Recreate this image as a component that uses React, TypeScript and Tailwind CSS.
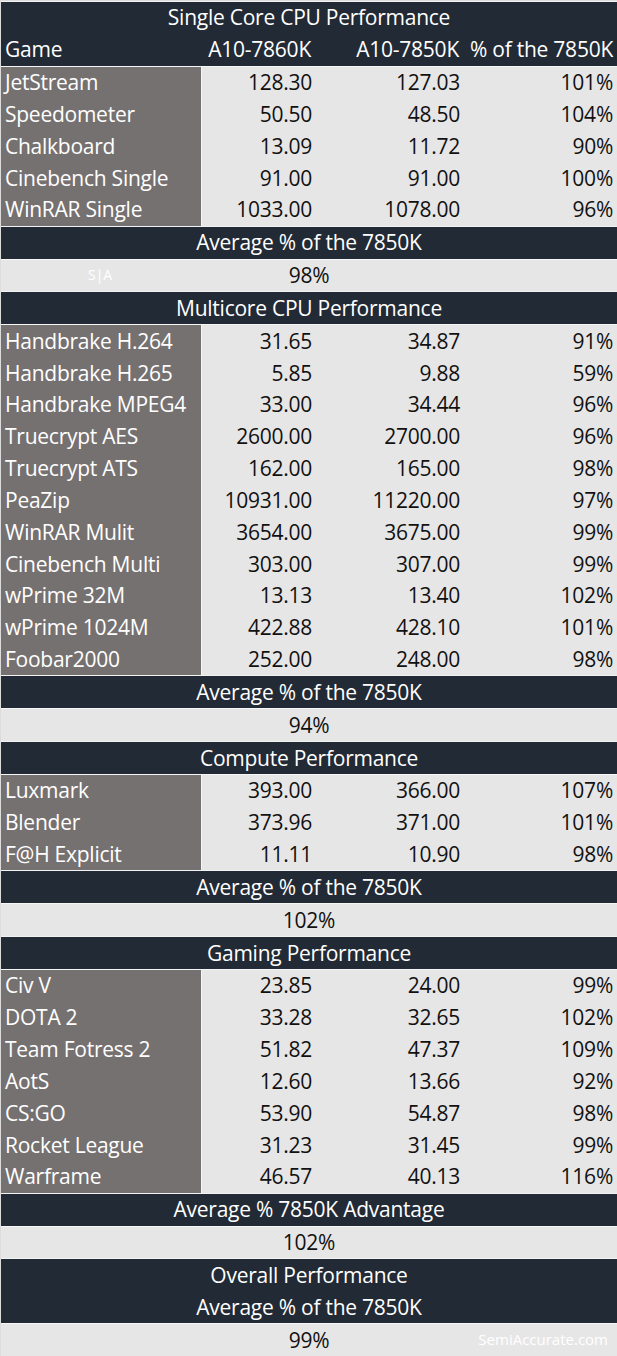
type Row = [string, string, string, string];

type Block =
  | { kind: "title"; text: string }
  | { kind: "head" }
  | { kind: "data"; rows: Row[] }
  | { kind: "value"; text: string; mark?: "sa" | "site" };

const blocks: Block[] = [
  { kind: "title", text: "Single Core CPU Performance" },
  { kind: "head" },
  {
    kind: "data",
    rows: [
      ["JetStream", "128.30", "127.03", "101%"],
      ["Speedometer", "50.50", "48.50", "104%"],
      ["Chalkboard", "13.09", "11.72", "90%"],
      ["Cinebench Single", "91.00", "91.00", "100%"],
      ["WinRAR Single", "1033.00", "1078.00", "96%"],
    ],
  },
  { kind: "title", text: "Average % of the 7850K" },
  { kind: "value", text: "98%", mark: "sa" },
  { kind: "title", text: "Multicore CPU Performance" },
  {
    kind: "data",
    rows: [
      ["Handbrake H.264", "31.65", "34.87", "91%"],
      ["Handbrake H.265", "5.85", "9.88", "59%"],
      ["Handbrake MPEG4", "33.00", "34.44", "96%"],
      ["Truecrypt AES", "2600.00", "2700.00", "96%"],
      ["Truecrypt ATS", "162.00", "165.00", "98%"],
      ["PeaZip", "10931.00", "11220.00", "97%"],
      ["WinRAR Mulit", "3654.00", "3675.00", "99%"],
      ["Cinebench Multi", "303.00", "307.00", "99%"],
      ["wPrime 32M", "13.13", "13.40", "102%"],
      ["wPrime 1024M", "422.88", "428.10", "101%"],
      ["Foobar2000", "252.00", "248.00", "98%"],
    ],
  },
  { kind: "title", text: "Average % of the 7850K" },
  { kind: "value", text: "94%" },
  { kind: "title", text: "Compute Performance" },
  {
    kind: "data",
    rows: [
      ["Luxmark", "393.00", "366.00", "107%"],
      ["Blender", "373.96", "371.00", "101%"],
      ["F@H Explicit", "11.11", "10.90", "98%"],
    ],
  },
  { kind: "title", text: "Average % of the 7850K" },
  { kind: "value", text: "102%" },
  { kind: "title", text: "Gaming Performance" },
  {
    kind: "data",
    rows: [
      ["Civ V", "23.85", "24.00", "99%"],
      ["DOTA 2", "33.28", "32.65", "102%"],
      ["Team Fotress 2", "51.82", "47.37", "109%"],
      ["AotS", "12.60", "13.66", "92%"],
      ["CS:GO", "53.90", "54.87", "98%"],
      ["Rocket League", "31.23", "31.45", "99%"],
      ["Warframe", "46.57", "40.13", "116%"],
    ],
  },
  { kind: "title", text: "Average % 7850K Advantage" },
  { kind: "value", text: "102%" },
  { kind: "title", text: "Overall Performance" },
  { kind: "title", text: "Average % of the 7850K" },
  { kind: "value", text: "99%", mark: "site" },
];

const font = { fontFamily: '"Open Sans", "Noto Sans", sans-serif' };

function Cells({ row, dark }: { row: Row; dark?: boolean }) {
  return (
    <div className="flex flex-1 basis-0 min-h-0 items-center">
      <div className={`w-[200px] h-full flex items-center pl-[4px] whitespace-nowrap ${dark ? "" : "bg-[#767171]"}`}>
        {row[0]}
      </div>
      <div className={`h-full flex flex-1 items-center ${dark ? "" : "bg-[#e7e6e6] text-[#111] border-l border-[#f6f6f6]"}`}>
        <div className="w-[110px] text-right whitespace-nowrap">{row[1]}</div>
        <div className="w-[148px] text-right whitespace-nowrap">{row[2]}</div>
        <div className="flex-1 text-right pr-[4px] whitespace-nowrap">{row[3]}</div>
      </div>
    </div>
  );
}

export default function App() {
  return (
    <div
      className="w-[617px] h-[1356px] bg-[#e7e6e6] border-t border-l border-[#dcdcdc] flex flex-col text-[21px] leading-none text-white tracking-[-0.25px]"
      style={font}
    >
      {blocks.map((b, i) => {
        if (b.kind === "title") {
          const prevDark = i > 0 && blocks[i - 1].kind === "title";
          return (
            <div
              key={i}
              className={`flex-1 basis-0 min-h-0 flex items-center justify-center bg-[#222a35] ${prevDark ? "" : "border-t border-[#f2f2f2]"}`}
            >
              {b.text}
            </div>
          );
        }
        if (b.kind === "head") {
          return (
            <div key={i} className="flex-1 basis-0 min-h-0 flex bg-[#222a35]">
              <Cells row={["Game", "A10-7860K", "A10-7850K", "% of the 7850K"]} dark />
            </div>
          );
        }
        if (b.kind === "data") {
          return (
            <div
              key={i}
              className="flex flex-col basis-0 min-h-0 border-t border-[#f6f6f6]"
              style={{ flexGrow: b.rows.length }}
            >
              {b.rows.map((r) => (
                <Cells key={r[0]} row={r} />
              ))}
            </div>
          );
        }
        return (
          <div
            key={i}
            className="relative flex-1 basis-0 min-h-0 flex items-center justify-center bg-[#e7e6e6] text-[#111] border-t border-[#f6f6f6]"
          >
            {b.text}
            {b.mark === "sa" && (
              <span className="absolute left-[87px] top-[8px] text-[14px] tracking-normal text-white">S|A</span>
            )}
            {b.mark === "site" && (
              <span className="absolute right-[9px] top-[8px] text-[15px] tracking-normal text-white">SemiAccurate.com</span>
            )}
          </div>
        );
      })}
    </div>
  );
}
